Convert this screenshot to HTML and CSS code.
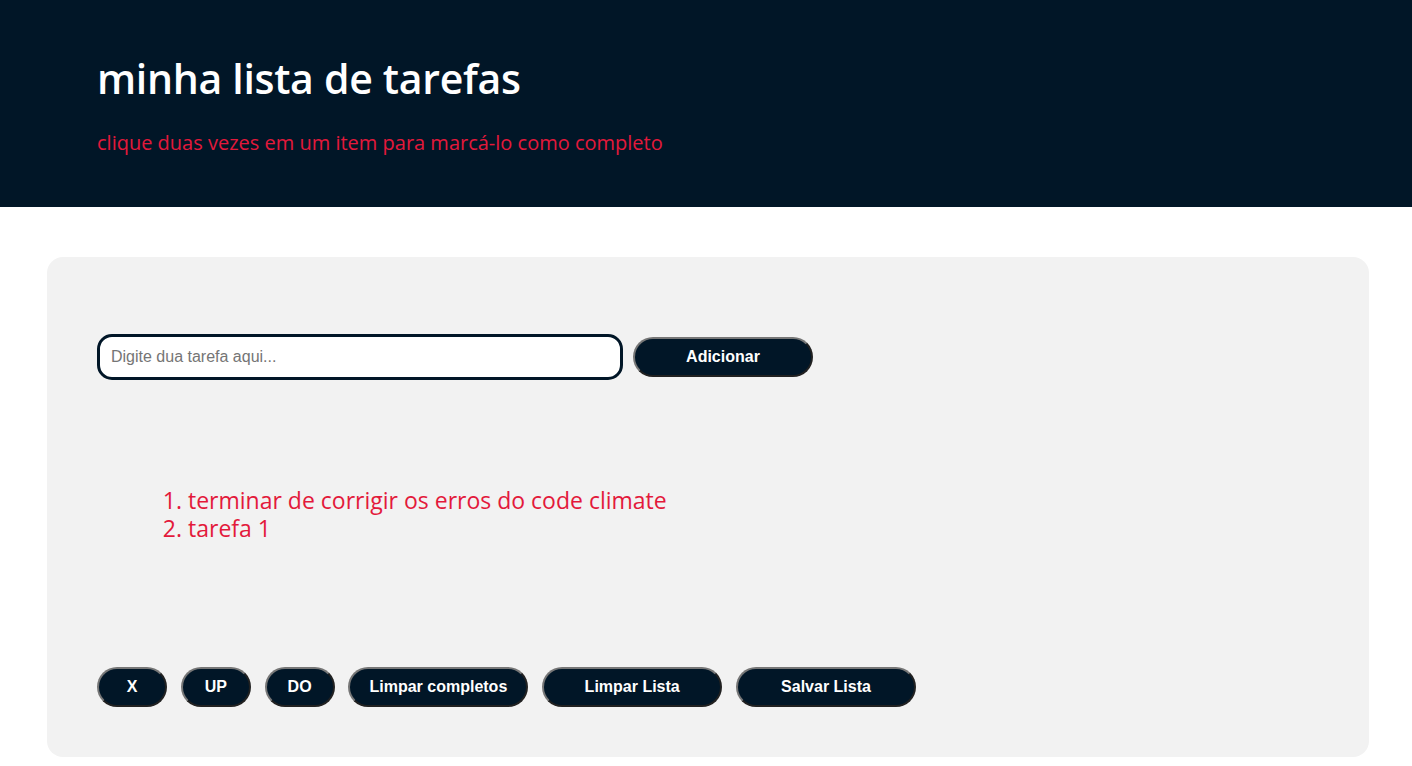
FILE: index.html
```html
<!DOCTYPE html>
<html lang="pt-BR">
<head>
<meta charset="utf-8">
<title>minha lista de tarefas</title>
<link rel="stylesheet" href="styles.css">
</head>
<body>
<header class="topo">
  <h1 class="titulo">minha lista de tarefas</h1>
  <p class="dica">clique duas vezes em um item para marcá-lo como completo</p>
</header>
<main class="cartao">
  <div class="entrada">
    <input class="campo" type="text" placeholder="Digite dua tarefa aqui...">
    <button class="botao largo">Adicionar</button>
  </div>
  <ol class="lista">
    <li>terminar de corrigir os erros do code climate</li>
    <li>tarefa 1</li>
  </ol>
  <div class="acoes">
    <button class="botao">X</button>
    <button class="botao">UP</button>
    <button class="botao">DO</button>
    <button class="botao largo">Limpar completos</button>
    <button class="botao largo">Limpar Lista</button>
    <button class="botao largo">Salvar Lista</button>
  </div>
</main>
</body>
</html>
```
FILE: styles.css
```css
* { box-sizing: border-box; }
body {
  margin: 0;
  background: #ffffff;
  font-family: "Open Sans", "Noto Sans", sans-serif;
}
.topo {
  background: #011627;
  height: 207px;
  padding: 50px 97px 0;
}
.titulo {
  margin: 0;
  color: #ffffff;
  font-size: 41px;
  font-weight: 600;
  letter-spacing: -0.3px;
  line-height: 56px;
}
.dica {
  margin: 24px 0 0;
  color: #e3193b;
  font-size: 20px;
  line-height: 26px;
}
.cartao {
  margin: 50px 43px 10px 47px;
  background: #f2f2f2;
  border-radius: 16px;
  height: 500px;
  padding: 77px 50px 0;
  display: flex;
  flex-direction: column;
}
.entrada {
  display: flex;
  align-items: center;
  gap: 10px;
}
.campo {
  width: 526px;
  height: 46px;
  border: 3px solid #011627;
  border-radius: 15px;
  padding: 0 11px;
  font-family: "Liberation Sans", Arial, sans-serif;
  font-size: 16px;
  background: #fff;
  outline: none;
}
.campo::placeholder { color: #757575; }
.botao {
  width: 70px;
  height: 40px;
  background: #011627;
  color: #ffffff;
  border: 2px outset #767676;
  border-radius: 20px;
  font-family: "Liberation Sans", Arial, sans-serif;
  font-weight: bold;
  font-size: 16px;
  padding: 0;
}
.botao.largo { width: 180px; }
.lista {
  margin: 106px 0 0;
  padding-left: 91px;
  color: #e3193b;
  font-size: 23px;
  line-height: 28px;
}
.acoes {
  margin-top: 125px;
  display: flex;
  gap: 13.8px;
}
```
